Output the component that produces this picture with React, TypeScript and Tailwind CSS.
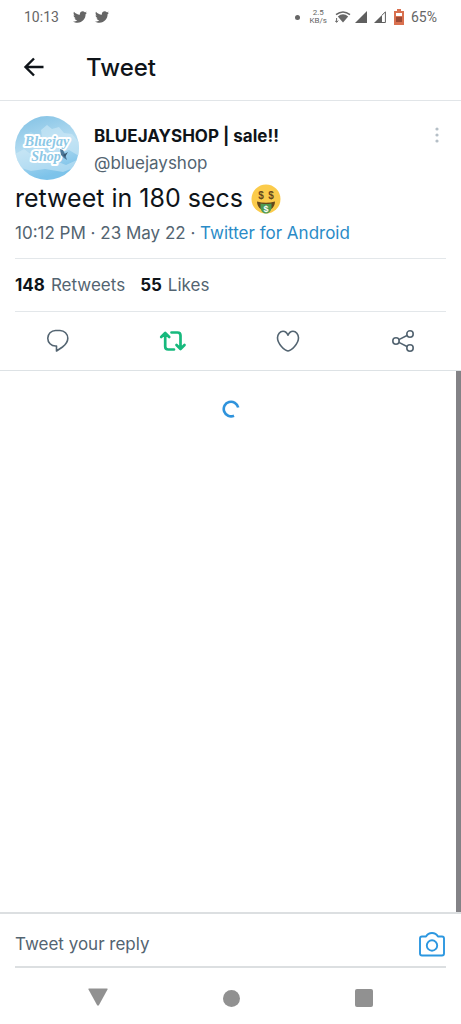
import type { ReactNode } from 'react';
import { FaTwitter } from 'react-icons/fa';

function StatusBar() {
  return (
    <div className="flex h-[34px] items-center justify-between px-6 font-[Roboto,sans-serif] text-sm text-[#666]">
      <div className="flex items-center gap-2">
        <span className="mr-[6px]">10:13</span>
        <FaTwitter className="size-[14px]" />
        <FaTwitter className="size-[14px]" />
      </div>
      <div className="flex items-center">
        <span className="mr-[10px] size-[5px] rounded-full bg-[#666]" />
        <span className="mr-2 text-center text-[8px] leading-2">
          2.5
          <br />
          KB/s
        </span>
        <svg viewBox="0 0 16 14" className="mr-1 h-[14px] w-4">
          <path d="M1 4.6Q8-.8 15 4.6" fill="none" stroke="#666" strokeWidth="1.5" />
          <path d="M2.8 6.4Q8 2.2 13.2 6.4L8 12.6Z" fill="#666" />
          <path d="M1.6 8v4M0 10.6l1.6 1.8 1.6-1.8" fill="none" stroke="#666" />
        </svg>
        <svg viewBox="0 0 12 12" className="mr-[7px] size-3">
          <path d="M12 0v12H0Z" fill="#5f5f5f" />
        </svg>
        <svg viewBox="0 0 12 12" className="mr-2 size-3">
          <path d="M8 4v8H0Z" fill="#5f5f5f" />
          <path d="M8 4.2 11.4.9v10.6H7" fill="none" stroke="#5f5f5f" />
        </svg>
        <svg viewBox="0 0 10 16" className="mr-[7px] h-4 w-[10px]">
          <path d="M3 0h4v2h3v14H0V2h3Z" fill="#d9704f" />
          <path d="M2 4h6v3H2Z" fill="#fff" />
          <path d="M2 8h6v5H2Z" fill="#9c4a35" />
        </svg>
        <span>65%</span>
      </div>
    </div>
  );
}

function Avatar() {
  return (
    <svg viewBox="0 0 64 64" className="size-16 shrink-0" role="img" aria-label="Bluejay Shop">
      <defs>
        <linearGradient id="sky" x1="0" y1="0" x2="0.3" y2="1">
          <stop offset="0" stopColor="#7fc0e4" />
          <stop offset="0.55" stopColor="#b4dcf1" />
          <stop offset="1" stopColor="#7dc3ea" />
        </linearGradient>
        <clipPath id="round">
          <circle cx="32" cy="32" r="32" />
        </clipPath>
      </defs>
      <g clipPath="url(#round)">
        <path d="M0 0h64v64H0Z" fill="url(#sky)" />
        <path d="M26 14l6-5 5 4 7-2 5 6 8 1 7 8v14l-10-6-12 4-14-8Z" fill="#cfeaf7" opacity="0.6" />
        <path d="M0 38l9-5 8 6 10 8 14-2 10 4 13-6v7l-16 6-18-3-14 2L0 50Z" fill="#d3ebf7" opacity="0.5" />
        <path d="M8 20l8-4 5 3-7 4Z" fill="#a9d8ef" />
      </g>
      <g
        className="font-['Liberation_Serif',serif] font-bold italic"
        fill="#8cc8e6"
        stroke="#fff"
        strokeWidth="4"
        strokeLinejoin="round"
        paintOrder="stroke"
        textAnchor="middle"
        fontSize="14"
      >
        <text x="32" y="30">Bluejay</text>
        <text x="31" y="45">Shop</text>
      </g>
      <path d="M45 33l3 1 2 4 2 6-3-2-3-3Z" fill="#4b7798" />
      <path d="M48 39l5-3-3 5Z" fill="#36566f" />
    </svg>
  );
}

function MoneyFace() {
  return (
    <svg viewBox="0 0 30 30" className="size-[30px]" role="img" aria-label="money-mouth face">
      <circle cx="15" cy="15" r="14.5" fill="#fbcb4b" />
      <g className="font-['Liberation_Sans',sans-serif] font-bold" textAnchor="middle">
        <text x="10" y="15" fontSize="10" fill="#65471b">$</text>
        <text x="20" y="15" fontSize="10" fill="#65471b">$</text>
        <path d="M6 17.5q9 2.5 18 0c0 5-3.5 9-9 9s-9-4-9-9Z" fill="#65471b" />
        <path d="M9.5 19.5q5.5 1 11 0v5q-1.5 5-5.5 5t-5.5-5Z" fill="#4f9a52" />
        <text x="15" y="27.5" fontSize="9" fill="#fff">$</text>
      </g>
    </svg>
  );
}

function Action({ label, className, children }: { label: string; className: string; children: ReactNode }) {
  return (
    <button type="button" aria-label={label} className={`flex items-center justify-center ${className}`}>
      <svg
        viewBox="0 0 28 24"
        className="h-6 w-7"
        fill="none"
        stroke="currentColor"
        strokeWidth="1.6"
        strokeLinecap="round"
        strokeLinejoin="round"
      >
        {children}
      </svg>
    </button>
  );
}

export default function App() {
  return (
    <div className="flex min-h-screen flex-col bg-white font-[Inter,sans-serif] text-[#0f1419]">
      <StatusBar />

      <header className="flex h-[67px] items-center gap-10 border-b border-[#e1e5e8] px-[22px]">
        <button type="button" aria-label="Back">
          <svg viewBox="0 0 24 24" className="size-6" fill="none" stroke="currentColor" strokeWidth="2.4">
            <path d="M21.5 12H4M12 3.5 3.5 12l8.500 8.500" />
          </svg>
        </button>
        <h1 className="pt-[2px] text-2xl font-medium">Tweet</h1>
      </header>

      <article className="pt-[15px]">
        <div className="flex px-[15px]">
          <Avatar />
          <div className="ml-[15px] flex-1 pt-[7px]">
            <div className="text-[17px] leading-[27px] font-bold">BLUEJAYSHOP | sale!!</div>
            <div className="text-[17px] leading-[27px] text-[#536471]">@bluejayshop</div>
          </div>
          <button type="button" aria-label="More" className="flex h-[38px] w-[18px] items-center justify-center">
            <svg viewBox="0 0 4 16" className="h-4 w-1" fill="#b5bfc7">
              <circle cx="2" cy="2" r="1.6" />
              <circle cx="2" cy="8" r="1.6" />
              <circle cx="2" cy="14" r="1.6" />
            </svg>
          </button>
        </div>

        <p className="flex h-[38px] items-center gap-2 px-[15px] text-[25px]">
          retweet in 180 secs
          <MoneyFace />
        </p>
        <p className="px-[15px] text-[17px] leading-[30px] text-[#536471]">
          10:12 PM · 23 May 22 ·{' '}
          <a href="#source" className="text-[#2a8bc7]">
            Twitter for Android
          </a>
        </p>

        {/* Counts */}
        <div className="mx-[15px] mt-[10px] flex h-[54px] items-center gap-[15px] border-y border-[#e3e7ea] pt-[2px] text-[17px] text-[#536471]">
          <span className="flex gap-[6px]">
            <b className="text-[#0f1419]">148</b> Retweets
          </span>
          <span className="flex gap-[6px]">
            <b className="text-[#0f1419]">55</b> Likes
          </span>
        </div>

        {/* Actions */}
        <div className="grid h-[59px] grid-cols-4 border-b border-[#dde2e5]">
          <Action label="Reply" className="text-[#536471]">
            <path d="M11.5 1.500h4.500a7.800 7.800 0 0 1 7.800 7.800c0 4.200-2.600 6.700-5.300 8.700L12.500 22v-5H11.500a7.750 7.750 0 0 1 0-15.500Z" />
          </Action>
          <Action label="Undo retweet" className="text-[#17b97d]">
            <path
              d="M2.200 8l4-4 4 4M6.200 4.500v13q0 3 3 3h5.800M12.500 3.500h6q3 0 3 3V19.500M17.500 16l4 4 4-4"
              strokeWidth="2.700"
            />
          </Action>
          <Action label="Like" className="text-[#536471]">
            <path d="M14 22C10.500 21.500 3.500 14.800 3.500 8.800c0-3.600 2.500-6.600 5.500-6.600 2.200 0 4 1.600 5 4 1-2.400 2.800-4 5-4 3 0 5.500 3 5.500 6.600 0 6-7 12.700-10.500 13.200Z" />
          </Action>
          <Action label="Share" className="text-[#536471]">
            <circle cx="7" cy="12" r="3.200" />
            <circle cx="21" cy="5" r="3.200" />
            <circle cx="21" cy="19" r="3.200" />
            <path d="M9.900 10.600 18 6.500M9.900 13.400 18 17.500" />
          </Action>
        </div>
      </article>

      {/* Replies are still loading */}
      <main className="flex flex-1 justify-center border-r-[5px] border-[#838286] pt-[29px] pl-[5px]">
        <svg viewBox="0 0 18 18" className="size-[18px]" role="status" aria-label="Loading">
          <path d="M16.200 7.500A7.300 7.300 0 1 0 12 15.700" fill="none" stroke="#2f93dc" strokeWidth="2.600" />
        </svg>
      </main>

      <footer>
        <div className="border-t-2 border-[#dcdfe1] px-[15px]">
          <div className="flex h-[54px] items-center border-b-2 border-[#dcdfe1] pt-2">
            <input
              type="text"
              aria-label="Tweet your reply"
              placeholder="Tweet your reply"
              className="min-w-0 flex-1 pt-[2px] text-[17px] outline-none placeholder:text-[#536471]"
            />
            <button type="button" aria-label="Add photo" className="mr-[1px]">
              <svg viewBox="0 0 26 26" className="size-[26px]" fill="none" stroke="#2c97e0" strokeWidth="1.9" strokeLinejoin="round">
                <path d="M3 5.500h4Q9 2 13 2t6 3.500h4q2 0 2 2V22.500q0 2-2 2H3q-2 0-2-2v-15q0-2 2-2Z" />
                <circle cx="13" cy="14.500" r="5.200" />
              </svg>
            </button>
          </div>
        </div>
        <nav className="flex h-14 items-center justify-between px-[88px] pt-1 text-[#919191]">
          <button type="button" aria-label="Hide keyboard">
            <svg viewBox="0 0 20 20" className="size-5" fill="currentColor">
              <path d="M1 .5h18q1 0 .5 1L11 17q-1 1.500-2 0L.5 1.500Q0 .5 1 .5Z" />
            </svg>
          </button>
          <button type="button" aria-label="Home" className="size-[17px] rounded-full bg-current" />
          <button type="button" aria-label="Recent apps" className="size-[18px] rounded-xs bg-current" />
        </nav>
      </footer>
    </div>
  );
}
